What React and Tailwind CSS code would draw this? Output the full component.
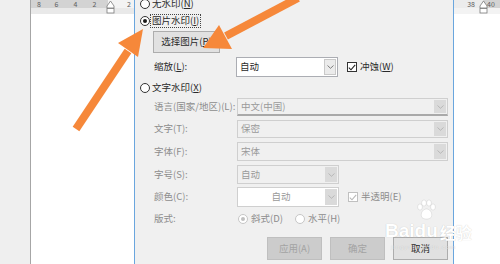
import React from 'react';

// Shared type: small CJK UI text like the Word dialog
const CJK = "font-['Noto_Sans_CJK_SC','Noto_Sans',sans-serif]";

function Radio({ checked, disabled }) {
  return (
    <span
      className={`flex h-[10px] w-[10px] shrink-0 items-center justify-center rounded-full border bg-white ${
        disabled ? 'border-[#c6c6c6]' : 'border-[#333333]'
      }`}
    >
      {checked && (
        <span className={`h-[4px] w-[4px] rounded-full ${disabled ? 'bg-[#c0c0c0]' : 'bg-[#1a1a1a]'}`} />
      )}
    </span>
  );
}

function Check({ disabled }) {
  return (
    <span
      className={`flex h-[10px] w-[10px] shrink-0 items-center justify-center border bg-white ${
        disabled ? 'border-[#c0c0c0]' : 'border-[#333333]'
      }`}
    >
      <svg width="8" height="7" viewBox="0 0 8 7">
        <path d="M0.8 3.6 L3 5.8 L7.2 0.8" fill="none" stroke={disabled ? '#b8b8b8' : '#222'} strokeWidth="1.1" />
      </svg>
    </span>
  );
}

function Chevron({ color = '#8a8a8a' }) {
  return (
    <svg width="7" height="4" viewBox="0 0 7 4">
      <path d="M0.5 0.5 L3.5 3.3 L6.5 0.5" fill="none" stroke={color} strokeWidth="0.9" />
    </svg>
  );
}

/**
 * Combo box: text field + gray drop button on the right.
 */
function Combo({ value, wide, disabled, white, center, list }) {
  return (
    <div
      className={`flex h-full ${wide ? 'w-[211px]' : 'w-[102px]'} border ${
        disabled ? 'border-[#cfcfcf]' : 'border-[#abadb3]'
      } ${white ? 'bg-white' : 'bg-[#f0f0f0]'} ${list ? 'border-b-2 border-b-[#a9a9a9]' : ''}`}
    >
      <div
        className={`flex flex-1 items-center px-[3px] ${center ? 'justify-center' : ''} ${
          disabled ? 'text-[#9a9a9a]' : 'text-[#2a2a2a]'
        }`}
      >
        {value}
      </div>
      <div
        className={`m-[1px] flex w-[12px] items-center justify-center ${
          disabled ? 'bg-[#dadada]' : 'border border-[#c9c9c9] bg-[#ebebeb]'
        }`}
      >
        <Chevron color={disabled ? '#b3b3b3' : '#707070'} />
      </div>
    </div>
  );
}

function IndentMarker() {
  return (
    <svg width="9" height="14" viewBox="0 0 9 14">
      <path d="M4.5 1 L8 6 L8 8 L1 8 L1 6 Z" fill="#fff" stroke="#7a7a7a" strokeWidth="0.8" />
      <rect x="1" y="8.5" width="7" height="4.5" fill="#fff" stroke="#7a7a7a" strokeWidth="0.8" />
    </svg>
  );
}

function FieldRow({ label, h, mt, children }) {
  return (
    <div className={`ml-[19px] flex ${h} ${mt} items-center`}>
      <span className="w-[83px] shrink-0 whitespace-nowrap text-[#8d8d8d]">{label}</span>
      {children}
    </div>
  );
}

export default function App() {
  return (
    <div className={`relative flex h-[264px] w-[500px] overflow-hidden bg-[#f1f1f1] ${CJK}`}>
      {/* Gray work area left of the page */}
      <div className="w-[30px] shrink-0 bg-[#efefef]" />

      {/* Left part of the document page with the ruler */}
      <div className="flex w-[104px] shrink-0 flex-col border-l border-[#a6a6a6] bg-white">
        <div className="relative flex h-[8px] text-[7px] leading-[8px] text-[#5d5d5d]">
          <div className="flex w-[77px] bg-[#d3d3d3]">
            <span className="w-[16px] text-center">8</span>
            <span className="w-[19px] text-center">6</span>
            <span className="w-[19px] text-center">4</span>
            <span className="w-[19px] text-center">2</span>
          </div>
          <div className="flex flex-1 justify-end bg-[#f3f3f3] pr-[3px]">2</div>
          <div className="absolute left-[75px] top-0">
            <IndentMarker />
          </div>
        </div>
        <div className="h-[6px] bg-[#e9e9e9]" />
        <div className="flex-1" />
      </div>

      {/* Watermark dialog */}
      <div className="flex w-[320px] shrink-0 flex-col border-x border-[#6aa6de] bg-[#f0f0f0] text-[9.5px] leading-none text-[#2a2a2a]">
        <div className="-mt-[3px] ml-[5px] flex h-[14px] items-center">
          <Radio />
          <span className="border border-transparent px-[1px] py-[1px]">
            无水印(<u>N</u>)
          </span>
        </div>
        <div className="ml-[5px] mt-[3px] flex h-[14px] items-center">
          <Radio checked />
          <span className="border border-dotted border-[#444] px-[1px] py-[1px]">
            图片水印(<u>I</u>)
          </span>
        </div>
        <div className="ml-[18px] mt-[3px] flex h-[22px] w-[67px] items-center justify-center border border-[#adadad] bg-[#e1e1e1]">
          <span>
            选择图片(<u>P</u>)
          </span>
        </div>
        <div className="ml-[19px] mt-[4px] flex h-[20px] items-center">
          <span className="w-[82px] shrink-0">
            缩放(<u>L</u>):
          </span>
          <Combo value="自动" white />
          <span className="ml-[9px] flex items-center gap-[3px]">
            <Check />
            <span>
              冲蚀(<u>W</u>)
            </span>
          </span>
        </div>
        <div className="ml-[5px] mt-[4px] flex h-[14px] items-center">
          <Radio />
          <span className="border border-transparent px-[1px] py-[1px]">
            文字水印(<u>X</u>)
          </span>
        </div>
        <FieldRow label="语言(国家/地区)(L):" h="h-[18px]" mt="mt-[3px]">
          <Combo value="中文(中国)" wide disabled list />
        </FieldRow>
        <FieldRow label="文字(T):" h="h-[18px]" mt="mt-[4px]">
          <Combo value="保密" wide disabled />
        </FieldRow>
        <FieldRow label="字体(F):" h="h-[19px]" mt="mt-[4px]">
          <Combo value="宋体" wide disabled />
        </FieldRow>
        <FieldRow label="字号(S):" h="h-[19px]" mt="mt-[4px]">
          <Combo value="自动" disabled />
        </FieldRow>
        <FieldRow label="颜色(C):" h="h-[20px]" mt="mt-[3px]">
          <Combo value="自动" disabled white center />
          <span className="ml-[9px] flex items-center gap-[3px] text-[#8d8d8d]">
            <Check disabled />
            <span>半透明(E)</span>
          </span>
        </FieldRow>
        <FieldRow label="版式:" h="h-[14px]" mt="mt-[5px]">
          <span className="ml-[1px] flex items-center gap-[3px] text-[#8d8d8d]">
            <Radio checked disabled />
            <span>斜式(D)</span>
          </span>
          <span className="ml-[12px] flex items-center gap-[3px] text-[#8d8d8d]">
            <Radio disabled />
            <span>水平(H)</span>
          </span>
        </FieldRow>
        <div className="mt-[11px] flex h-[23px] justify-end gap-[8px] pr-[5px]">
          <div className="flex w-[55px] items-center justify-center border border-[#bfbfbf] bg-[#cccccc] text-[#a3a3a3]">
            应用(A)
          </div>
          <div className="flex w-[55px] items-center justify-center border border-[#bfbfbf] bg-[#cccccc] text-[#a3a3a3]">
            确定
          </div>
          <div className="flex w-[55px] items-center justify-center border border-[#adadad] bg-[#e1e1e1]">
            取消
          </div>
        </div>
      </div>

      {/* Right part of the document page */}
      <div className="flex flex-1 flex-col bg-white">
        <div className="relative flex h-[8px] text-[7px] leading-[8px] text-[#5d5d5d]">
          <div className="flex w-[29px] justify-end bg-[#ececec] pr-[8px]">38</div>
          <div className="flex flex-1 bg-[#d3d3d3] pl-[4px]">40</div>
          <div className="absolute left-[25px] top-0">
            <IndentMarker />
          </div>
        </div>
        <div className="h-[6px] bg-[#f3f3f3]" />
      </div>

      {/* Baidu jingyan watermark over the corner */}
      <div className="pointer-events-none absolute left-[385px] top-[221px] flex flex-col text-white [text-shadow:0_0_1px_rgba(0,0,0,0.22)]">
        <div className="flex items-end font-['Liberation_Sans',sans-serif] text-[19px] font-bold leading-none">
          <span>Bai</span>
          <span className="relative">
            <svg className="absolute -top-[22px] left-[0px]" width="22" height="22" viewBox="0 0 22 22">
              <g fill="#fff" stroke="rgba(0,0,0,0.14)" strokeWidth="0.6">
                <ellipse cx="5" cy="8" rx="2.4" ry="3" />
                <ellipse cx="9" cy="4" rx="2.4" ry="3" />
                <ellipse cx="14" cy="4" rx="2.4" ry="3" />
                <ellipse cx="18" cy="8" rx="2.4" ry="3" />
                <path d="M11.5 10 C7 10 5 16 7 18.5 C9 20.5 14 20.5 16 18.5 C18 16 16 10 11.5 10 Z" />
              </g>
            </svg>
            du
          </span>
          <span className={`${CJK} ml-[2px] text-[16px] font-bold`}>经验</span>
        </div>
        <span className="mt-[3px] pl-[6px] font-['Liberation_Sans',sans-serif] text-[6px] tracking-[1px] text-white/70">
          jingyan.baidu.com
        </span>
      </div>

      {/* Orange annotation arrows */}
      <svg className="pointer-events-none absolute inset-0" width="500" height="264" viewBox="0 0 500 264">
        <g fill="#f6883a" stroke="#f6883a">
          <line x1="76" y1="129" x2="128" y2="51" strokeWidth="8" />
          <polygon points="143,29 118,43 138,57" stroke="none" />
          <line x1="298" y1="-2" x2="226" y2="36" strokeWidth="8" />
          <polygon points="203,48 219,25 232,49" stroke="none" />
        </g>
      </svg>
    </div>
  );
}
